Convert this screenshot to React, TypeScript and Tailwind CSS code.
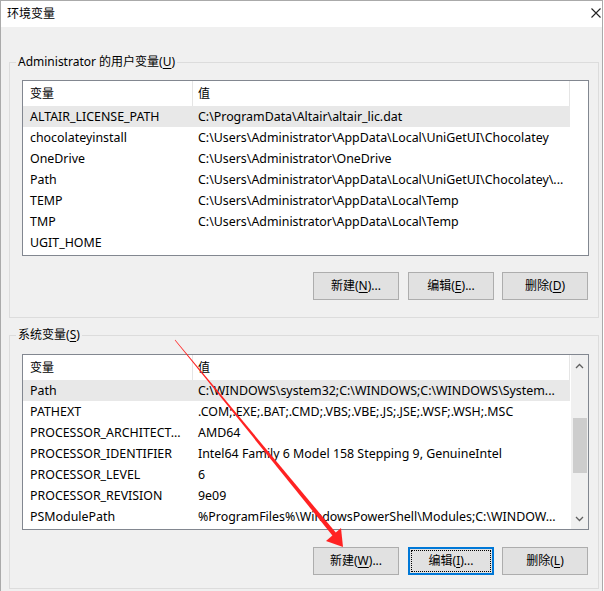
import type { ReactNode } from "react";

type Row = { name: string; value: string };

const userVars: Row[] = [
  { name: "ALTAIR_LICENSE_PATH", value: "C:\\ProgramData\\Altair\\altair_lic.dat" },
  { name: "chocolateyinstall", value: "C:\\Users\\Administrator\\AppData\\Local\\UniGetUI\\Chocolatey" },
  { name: "OneDrive", value: "C:\\Users\\Administrator\\OneDrive" },
  { name: "Path", value: "C:\\Users\\Administrator\\AppData\\Local\\UniGetUI\\Chocolatey\\..." },
  { name: "TEMP", value: "C:\\Users\\Administrator\\AppData\\Local\\Temp" },
  { name: "TMP", value: "C:\\Users\\Administrator\\AppData\\Local\\Temp" },
  { name: "UGIT_HOME", value: "" },
];

const systemVars: Row[] = [
  { name: "Path", value: "C:\\WINDOWS\\system32;C:\\WINDOWS;C:\\WINDOWS\\System..." },
  { name: "PATHEXT", value: ".COM;.EXE;.BAT;.CMD;.VBS;.VBE;.JS;.JSE;.WSF;.WSH;.MSC" },
  { name: "PROCESSOR_ARCHITECT...", value: "AMD64" },
  { name: "PROCESSOR_IDENTIFIER", value: "Intel64 Family 6 Model 158 Stepping 9, GenuineIntel" },
  { name: "PROCESSOR_LEVEL", value: "6" },
  { name: "PROCESSOR_REVISION", value: "9e09" },
  { name: "PSModulePath", value: "%ProgramFiles%\\WindowsPowerShell\\Modules;C:\\WINDOW..." },
];

function Mnemonic({ label, k, tail = "" }: { label: string; k: string; tail?: string }) {
  return (
    <span>
      {label}(<span className="underline underline-offset-2">{k}</span>){tail}
    </span>
  );
}

function WinButton({ children, focused = false }: { children: ReactNode; focused?: boolean }) {
  return (
    <button
      type="button"
      className={
        focused
          ? "flex h-[28px] w-[86px] items-center justify-center border-2 border-[#0078d7] bg-[#e1e1e1] text-[12px] text-black outline-1 outline-dotted outline-black outline-offset-[-4px]"
          : "flex h-[28px] w-[86px] items-center justify-center border border-[#adadad] bg-[#e1e1e1] text-[12px] text-black"
      }
    >
      {children}
    </button>
  );
}

function VarList({ rows, scrollbar = false }: { rows: Row[]; scrollbar?: boolean }) {
  return (
    <div className="flex h-[176px] w-[567px] border border-[#828790] bg-white">
      <div className="flex w-[547px] flex-col">
        <div className="flex h-[25px] items-center">
          <div className="flex h-full w-[170px] items-center border-r border-[#e5e5e5] pl-[7px]">变量</div>
          <div className="flex h-full flex-1 items-center border-r border-[#e5e5e5] pl-[5px]">值</div>
        </div>
        {rows.map((row, i) => (
          <div
            key={row.name}
            className={`flex h-[21px] items-center whitespace-nowrap pt-[2px] text-[12.4px] ${i === 0 ? "bg-[#e8e8e8]" : ""}`}
          >
            <div className="w-[170px] overflow-hidden pl-[7px]">{row.name}</div>
            <div className="flex-1 overflow-hidden pl-[5px]">{row.value}</div>
          </div>
        ))}
      </div>
      {scrollbar && (
        <div className="ml-auto flex w-[17px] flex-col items-center bg-[#f0f0f0]">
          <svg width="9" height="6" viewBox="0 0 9 6" className="mt-[8px]">
            <path d="M1 5 L4.5 1.5 L8 5" fill="none" stroke="#606060" strokeWidth="1.3" />
          </svg>
          <div className="mt-[49px] h-[55px] w-[14px] bg-[#cdcdcd]" />
          <svg width="9" height="6" viewBox="0 0 9 6" className="mt-auto mb-[7px]">
            <path d="M1 1 L4.5 4.5 L8 1" fill="none" stroke="#606060" strokeWidth="1.3" />
          </svg>
        </div>
      )}
    </div>
  );
}

function GroupBox({ title, height, children }: { title: ReactNode; height: string; children: ReactNode }) {
  return (
    <div className={`relative border border-[#dcdcdc] ${height}`}>
      <span className="absolute -top-[9px] left-[6px] bg-[#f0f0f0] px-[2px] leading-[16px]">{title}</span>
      {children}
    </div>
  );
}

export default function App() {
  return (
    <div
      className="relative h-[591px] w-[603px] overflow-hidden border-x border-t border-[#aaaaaa] bg-[#f0f0f0] text-[12px] text-black"
      style={{ fontFamily: '"Noto Sans", "Noto Sans CJK SC", sans-serif' }}
    >
      <div className="flex h-[26px] items-center justify-between bg-white pl-[6px] pr-[1px]">
        <span>环境变量</span>
        <svg width="10" height="10" viewBox="0 0 10 10" className="mb-[3px]">
          <path d="M0.5 0.5 L9.5 9.5 M9.5 0.5 L0.5 9.5" stroke="#222" strokeWidth="1.1" />
        </svg>
      </div>

      <div className="pl-[8px] pr-[3px]">
        <div className="mt-[35px]">
          <GroupBox title={<Mnemonic label="Administrator 的用户变量" k="U" />} height="h-[256px]">
            <div className="pl-[12px] pt-[17px]">
              <VarList rows={userVars} />
              <div className="mt-[16px] flex justify-end pr-[10px]">
                <WinButton>
                  <Mnemonic label="新建" k="N" tail="..." />
                </WinButton>
                <div className="ml-[9px]">
                  <WinButton>
                    <Mnemonic label="编辑" k="E" tail="..." />
                  </WinButton>
                </div>
                <div className="ml-[8px]">
                  <WinButton>
                    <Mnemonic label="删除" k="D" />
                  </WinButton>
                </div>
              </div>
            </div>
          </GroupBox>
        </div>

        <div className="mt-[17px]">
          <GroupBox title={<Mnemonic label="系统变量" k="S" />} height="h-[254px]">
            <div className="pl-[12px] pt-[18px]">
              <VarList rows={systemVars} scrollbar />
              <div className="mt-[17px] flex justify-end pr-[10px]">
                <WinButton>
                  <Mnemonic label="新建" k="W" tail="..." />
                </WinButton>
                <div className="ml-[9px]">
                  <WinButton focused>
                    <Mnemonic label="编辑" k="I" tail="..." />
                  </WinButton>
                </div>
                <div className="ml-[8px]">
                  <WinButton>
                    <Mnemonic label="删除" k="L" />
                  </WinButton>
                </div>
              </div>
            </div>
          </GroupBox>
        </div>
      </div>

      <svg className="pointer-events-none absolute -left-px -top-px" width="604" height="591" viewBox="0 0 604 591">
        <polygon points="175.2,339.8 174.8,340.2 333.4,536.8 336.8,533.8" fill="#ff2222" />
        <polygon points="343,547 326,541 341,528" fill="#ff2222" />
      </svg>
    </div>
  );
}
